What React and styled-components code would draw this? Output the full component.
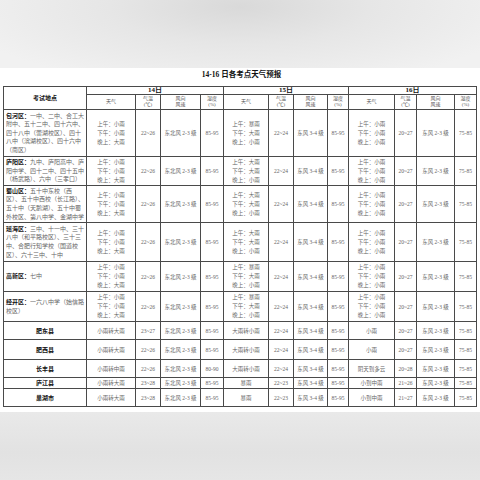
import React from "react";
import styled, { createGlobalStyle } from "styled-components";

const GlobalStyle = createGlobalStyle`
  html, body {
    margin: 0;
    padding: 0;
    background: #ffffff;
  }
`;

const cols = [83, 49, 25, 40, 23, 45, 25, 34, 21, 46, 22, 38, 22];

const districts = [
  {
    name: "包河区：",
    sites: "一中、二中、合工大附中、五十二中、四十六中、四十八中（蕾湖校区）、四十八中（滨湖校区）、四十六中（南区）",
    h: 47,
    am15: "暴雨",
  },
  {
    name: "庐阳区：",
    sites: "九中、庐阳高中、庐阳中学、四十二中、四十五中（杨武路）、六中（三孝口）",
    h: 29,
    am15: "大雨",
  },
  {
    name: "蜀山区：",
    sites: "五十中东校（西区）、五十中西校（长江路）、五十中（天鹅湖）、五十中蜀外校区、第八中学、金湖中学",
    h: 37,
    am15: "大雨",
  },
  {
    name: "瑶海区：",
    sites: "三中、十一中、三十八中（和平路校区）、三十三中、合肥行知学校（国道校区）、六十三中、十中",
    h: 39,
    am15: "大雨",
  },
  { name: "高新区：", sites: "七中", h: 30, am15: "暴雨" },
  { name: "经开区：", sites: "一六八中学（始信路校区）", h: 30, am15: "暴雨" },
];

const counties = [
  {
    name: "肥东县",
    h: 18,
    days: [
      ["小雨转大雨", "23~27", "东北风 2-3 级", "85-95"],
      ["大雨转小雨", "22~24", "东风 3-4 级", "85-95"],
      ["小雨", "20~27", "东风 2-3 级", "75-85"],
    ],
  },
  {
    name: "肥西县",
    h: 20,
    days: [
      ["小雨转大雨", "22~26", "东北风 2-3 级", "85-95"],
      ["大雨转小雨", "22~24", "东风 3-4 级", "85-95"],
      ["小雨", "20~27", "东风 2-3 级", "75-85"],
    ],
  },
  {
    name: "长丰县",
    h: 18,
    days: [
      ["小雨转中雨", "22~26", "东北风 2-3 级", "80-90"],
      ["大雨转小雨", "22~24", "东风 3-4 级", "85-95"],
      ["阴天到多云", "20~28", "东风 2-3 级", "75-85"],
    ],
  },
  {
    name: "庐江县",
    h: 11,
    days: [
      ["小雨转大雨", "23~28", "东北风 2-3 级", "85-95"],
      ["暴雨", "22~23", "东风 3-4 级", "85-95"],
      ["小到中雨", "21~26", "东风 2-3 级", "75-85"],
    ],
  },
  {
    name: "巢湖市",
    h: 18,
    days: [
      ["小雨转大雨", "23~28", "东北风 2-3 级", "85-95"],
      ["暴雨", "22~23", "东风 3-4 级", "85-95"],
      ["小到中雨", "21~27", "东风 2-3 级", "75-85"],
    ],
  },
];

const districtDays = (am15) => [
  [["上午：小雨", "下午：小雨", "晚上：大雨"], "22~26", "东北风 2-3 级", "85-95"],
  [[`上午：${am15}`, "下午：大雨", "晚上：小雨"], "22~24", "东风 3-4 级", "85-95"],
  [["上午：小雨", "下午：小雨", "晚上：小雨"], "20~27", "东风 2-3 级", "75-85"],
];

export default function App() {
  return (
    <Page>
      <GlobalStyle />
      <TopBand />
      <Sheet>
        <Title>14-16 日各考点天气预报</Title>
        <Table>
          <colgroup>
            {cols.map((w, i) => (
              <col key={i} style={{ width: `${w}px` }} />
            ))}
          </colgroup>
          <thead>
            <tr>
              <HeadCell rowSpan={2} $strong>考试地点</HeadCell>
              {["14日", "15日", "16日"].map((d) => (
                <DayCell key={d} colSpan={4}>{d}</DayCell>
              ))}
            </tr>
            <tr>
              {[0, 1, 2].map((i) => (
                <React.Fragment key={i}>
                  <HeadCell>天气</HeadCell>
                  <HeadCell>气温<br />(℃)</HeadCell>
                  <HeadCell>风向<br />风速</HeadCell>
                  <HeadCell>湿度<br />(%)</HeadCell>
                </React.Fragment>
              ))}
            </tr>
          </thead>
          <tbody>
            {districts.map((row) => (
              <tr key={row.name}>
                <PlaceCell style={{ height: `${row.h - 1}px` }}>
                  <PlaceName>{row.name}</PlaceName>
                  {row.sites}
                </PlaceCell>
                {districtDays(row.am15).map((day, i) => (
                  <React.Fragment key={i}>
                    <Cell>
                      {day[0].map((line) => (
                        <WeatherLine key={line}>{line}</WeatherLine>
                      ))}
                    </Cell>
                    <Cell>{day[1]}</Cell>
                    <Cell>{day[2]}</Cell>
                    <Cell>{day[3]}</Cell>
                  </React.Fragment>
                ))}
              </tr>
            ))}
            {counties.map((row) => (
              <tr key={row.name}>
                <CountyCell style={{ height: `${row.h - 1}px` }}>{row.name}</CountyCell>
                {row.days.map((day, i) => (
                  <React.Fragment key={i}>
                    {day.map((v, j) => (
                      <Cell key={j}>{v}</Cell>
                    ))}
                  </React.Fragment>
                ))}
              </tr>
            ))}
          </tbody>
        </Table>
      </Sheet>
      <BottomBand />
    </Page>
  );
}

const Page = styled.div`
  width: 480px;
  height: 480px;
  display: flex;
  flex-direction: column;
  overflow: hidden;
  background: #ffffff;
`;

const TopBand = styled.div`
  height: 68px;
  flex: none;
  background: radial-gradient(ellipse 60% 120% at 50% 10%, #d9d9d9 0%, #e6e6e6 45%, #f1f1f1 100%);
`;

const Sheet = styled.div`
  flex: none;
  height: 344px;
  padding: 0 4px 0 3px;
  box-sizing: border-box;
  background: #ffffff;
  overflow: hidden;
`;

const Title = styled.div`
  height: 18px;
  line-height: 14px;
  text-align: center;
  padding-left: 4px;
  font-family: "Liberation Serif", "Noto Sans CJK SC", serif;
  font-weight: bold;
  font-size: 7.5px;
  color: #111;
`;

const Table = styled.table`
  width: 473px;
  table-layout: fixed;
  border-collapse: collapse;
  border: 1.5px solid #555;
  font-family: "Liberation Serif", "Noto Sans CJK SC", serif;
  font-size: 5.5px;
  color: #666;

  td,
  th {
    border: 1px solid #4a4a4a;
    padding: 0;
    overflow: hidden;
  }
`;

const HeadCell = styled.th`
  height: 14px;
  line-height: 6.5px;
  font-weight: ${(p) => (p.$strong ? "bold" : "normal")};
  color: ${(p) => (p.$strong ? "#111" : "#555")};
  font-size: ${(p) => (p.$strong ? "6px" : "5px")};
  text-align: center;
  vertical-align: middle;
`;

const DayCell = styled.th`
  height: 7px;
  line-height: 7px;
  font-size: 7px;
  font-weight: bold;
  color: #111;
  text-align: center;
  vertical-align: middle;
`;

const Cell = styled.td`
  text-align: center;
  vertical-align: middle;
  line-height: 8px;
  white-space: nowrap;
`;

const WeatherLine = styled.div`
  line-height: 9px;
`;

const PlaceCell = styled.td`
  text-align: left;
  vertical-align: middle;
  font-size: 6px;
  line-height: 8.6px;
  padding: 0 1px 0 2px !important;
  word-break: break-all;
  color: #666;
`;

const PlaceName = styled.b`
  color: #111;
`;

const CountyCell = styled.td`
  text-align: center;
  vertical-align: middle;
  line-height: 8px;
  font-weight: bold;
  color: #111;
  font-size: 6px;
`;

const BottomBand = styled.div`
  flex: 1;
  background: linear-gradient(180deg, #e9e9e9 0%, #e2e2e2 60%, #e6e6e6 100%);
`;
